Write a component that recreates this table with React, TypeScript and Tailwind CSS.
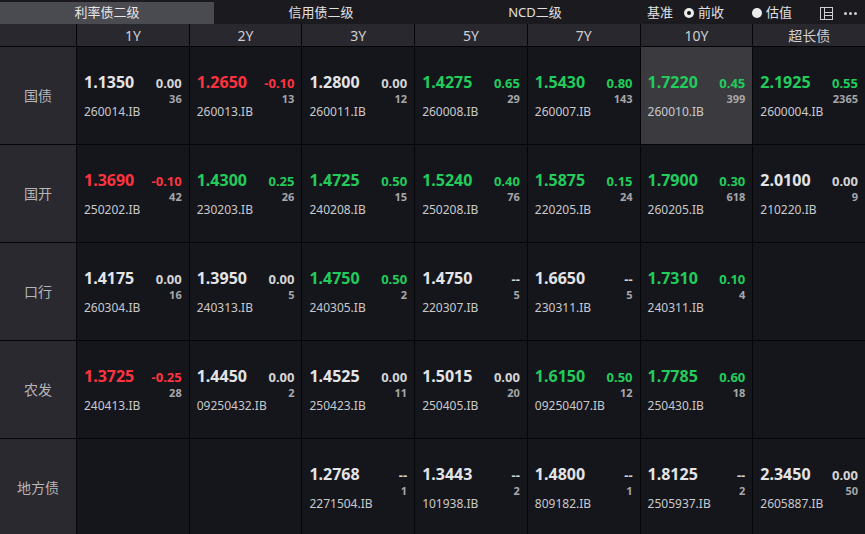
import React from "react"

type Tone = "up" | "down" | "flat"

interface Quote {
  price: string
  change: string
  count: string
  code: string
  tone: Tone
  active?: boolean
}

const tenors = ["1Y", "2Y", "3Y", "5Y", "7Y", "10Y", "超长债"]

const q = (price: string, change: string, count: string, code: string, tone: Tone = "flat", active = false): Quote => ({
  price,
  change,
  count,
  code,
  tone,
  active,
})

const rows: { name: string; cells: (Quote | null)[] }[] = [
  {
    name: "国债",
    cells: [
      q("1.1350", "0.00", "36", "260014.IB"),
      q("1.2650", "-0.10", "13", "260013.IB", "down"),
      q("1.2800", "0.00", "12", "260011.IB"),
      q("1.4275", "0.65", "29", "260008.IB", "up"),
      q("1.5430", "0.80", "143", "260007.IB", "up"),
      q("1.7220", "0.45", "399", "260010.IB", "up", true),
      q("2.1925", "0.55", "2365", "2600004.IB", "up"),
    ],
  },
  {
    name: "国开",
    cells: [
      q("1.3690", "-0.10", "42", "250202.IB", "down"),
      q("1.4300", "0.25", "26", "230203.IB", "up"),
      q("1.4725", "0.50", "15", "240208.IB", "up"),
      q("1.5240", "0.40", "76", "250208.IB", "up"),
      q("1.5875", "0.15", "24", "220205.IB", "up"),
      q("1.7900", "0.30", "618", "260205.IB", "up"),
      q("2.0100", "0.00", "9", "210220.IB"),
    ],
  },
  {
    name: "口行",
    cells: [
      q("1.4175", "0.00", "16", "260304.IB"),
      q("1.3950", "0.00", "5", "240313.IB"),
      q("1.4750", "0.50", "2", "240305.IB", "up"),
      q("1.4750", "--", "5", "220307.IB"),
      q("1.6650", "--", "5", "230311.IB"),
      q("1.7310", "0.10", "4", "240311.IB", "up"),
      null,
    ],
  },
  {
    name: "农发",
    cells: [
      q("1.3725", "-0.25", "28", "240413.IB", "down"),
      q("1.4450", "0.00", "2", "09250432.IB"),
      q("1.4525", "0.00", "11", "250423.IB"),
      q("1.5015", "0.00", "20", "250405.IB"),
      q("1.6150", "0.50", "12", "09250407.IB", "up"),
      q("1.7785", "0.60", "18", "250430.IB", "up"),
      null,
    ],
  },
  {
    name: "地方债",
    cells: [
      null,
      null,
      q("1.2768", "--", "1", "2271504.IB"),
      q("1.3443", "--", "2", "101938.IB"),
      q("1.4800", "--", "1", "809182.IB"),
      q("1.8125", "--", "2", "2505937.IB"),
      q("2.3450", "0.00", "50", "2605887.IB"),
    ],
  },
]

const priceColor: Record<Tone, string> = {
  up: "text-[#22cc5b]",
  down: "text-[#ff3340]",
  flat: "text-[#e4e4e6]",
}

const changeColor: Record<Tone, string> = {
  up: "text-[#22cc5b]",
  down: "text-[#ff3340]",
  flat: "text-[#d4d4d6]",
}

function QuoteCell({ quote }: { quote: Quote | null }) {
  if (!quote) return <div className="bg-[#15161b]" />
  return (
    <div className={`flex flex-col justify-center px-[7px] ${quote.active ? "bg-[#3a3a3f]" : "bg-[#15161b]"}`}>
      <div className="flex items-baseline justify-between">
        <span className={`text-[16px] font-bold leading-[20px] ${priceColor[quote.tone]}`}>{quote.price}</span>
        <span className={`text-[13px] font-bold leading-[20px] ${changeColor[quote.tone]}`}>{quote.change}</span>
      </div>
      <div className="text-right text-[11px] font-bold leading-[12px] text-[#a6a6aa]">{quote.count}</div>
      <div className="text-[12px] leading-[14px] text-[#c9c9cc]">{quote.code}</div>
    </div>
  )
}

function Radio({ checked }: { checked: boolean }) {
  return (
    <span className="flex h-[10px] w-[10px] items-center justify-center rounded-full bg-[#ececec]">
      {checked && <span className="h-[4px] w-[4px] rounded-full bg-[#111]" />}
    </span>
  )
}

export default function App() {
  return (
    <div
      className="flex h-[534px] w-[865px] flex-col overflow-hidden bg-[#050507]"
      style={{ fontFamily: '"Noto Sans", "Noto Sans CJK SC", sans-serif' }}
    >
      {/* Top tabs */}
      <div className="flex h-[24px] flex-shrink-0 bg-[#1b1b1f] pt-[2px] text-[13px]">
        <div className="flex w-[214px] items-center justify-center bg-[#4a4a51] text-[#e6e6e8]">利率债二级</div>
        <div className="flex w-[214px] items-center justify-center text-[#e0e0e2]">信用债二级</div>
        <div className="flex w-[214px] items-center justify-center text-[#e0e0e2]">NCD二级</div>
        <div className="flex flex-1 items-center pl-[5px] text-[#e0e0e2]">
          <span>基准</span>
          <span className="ml-[11px]">
            <Radio checked />
          </span>
          <span className="ml-[4px]">前收</span>
          <span className="ml-[28px]">
            <Radio checked={false} />
          </span>
          <span className="ml-[4px]">估值</span>
          <svg className="ml-[28px]" width="13" height="13" viewBox="0 0 13 13" fill="none" stroke="#cfcfd2" strokeWidth="1">
            <rect x="0.5" y="0.5" width="12" height="12" />
            <line x1="4.5" y1="0.5" x2="4.5" y2="12.5" />
            <line x1="4.5" y1="5.5" x2="12.5" y2="5.5" />
            <line x1="4.5" y1="8.5" x2="12.5" y2="8.5" />
          </svg>
          <span className="ml-[11px] flex gap-[2px]">
            <span className="h-[3px] w-[3px] rounded-full bg-[#cfcfd2]" />
            <span className="h-[3px] w-[3px] rounded-full bg-[#cfcfd2]" />
            <span className="h-[3px] w-[3px] rounded-full bg-[#cfcfd2]" />
          </span>
        </div>
      </div>

      {/* Grid */}
      <div className="grid grid-cols-[76px_repeat(7,1fr)] grid-rows-[22px_repeat(5,97px)] gap-px">
        <div className="bg-[#28282e]" />
        {tenors.map((t) => (
          <div key={t} className="flex items-center justify-center bg-[#28282e] text-[14px] text-[#d0d0d3]">
            {t}
          </div>
        ))}
        {rows.map((row) => (
          <React.Fragment key={row.name}>
            <div className="flex items-center justify-center bg-[#29292f] text-[14px] text-[#b6b6ba]">{row.name}</div>
            {row.cells.map((c, i) => (
              <QuoteCell key={i} quote={c} />
            ))}
          </React.Fragment>
        ))}
      </div>
    </div>
  )
}
